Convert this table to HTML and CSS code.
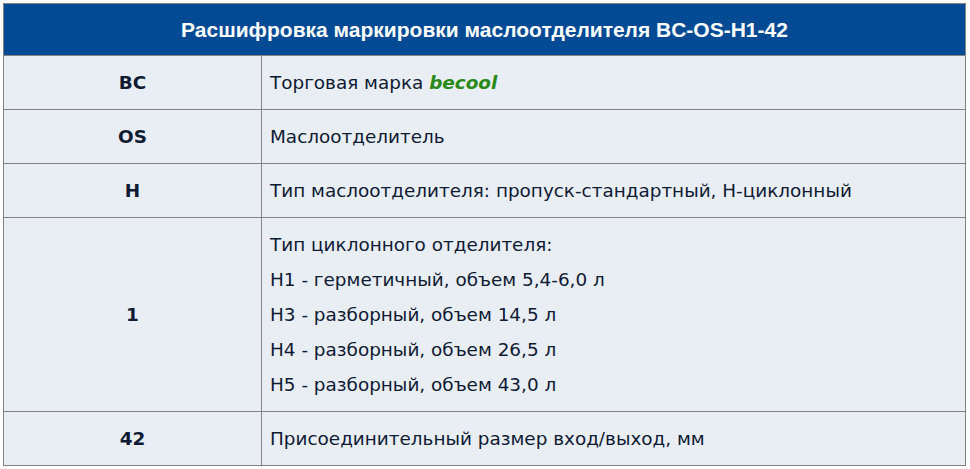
FILE: index.html
```html
<!DOCTYPE html>
<html lang="ru">
<head>
<meta charset="utf-8">
<link rel="stylesheet" href="styles.css">
</head>
<body>
<table class="decode">
  <thead>
    <tr><th colspan="2" class="title">Расшифровка маркировки маслоотделителя BC-OS-H1-42</th></tr>
  </thead>
  <tbody>
    <tr><td class="code">BC</td><td class="desc">Торговая марка <span class="brand">becool</span></td></tr>
    <tr><td class="code">OS</td><td class="desc">Маслоотделитель</td></tr>
    <tr><td class="code">H</td><td class="desc">Тип маслоотделителя: пропуск-стандартный, Н-циклонный</td></tr>
    <tr><td class="code">1</td><td class="desc">
      <div class="line">Тип циклонного отделителя:</div>
      <div class="line">H1 - герметичный, объем 5,4-6,0 л</div>
      <div class="line">H3 - разборный, объем 14,5 л</div>
      <div class="line">H4 - разборный, объем 26,5 л</div>
      <div class="line">H5 - разборный, объем 43,0 л</div>
    </td></tr>
    <tr><td class="code">42</td><td class="desc">Присоединительный размер вход/выход, мм</td></tr>
  </tbody>
</table>
</body>
</html>
```
FILE: styles.css
```css
html, body {
  margin: 0;
  padding: 0;
  background: #ffffff;
}
body {
  padding: 3px 0 0 3px;
}
.decode {
  border-collapse: collapse;
  width: 963px;
  font-family: "DejaVu Sans", sans-serif;
  font-size: 18.4px;
  color: #0f1a33;
}
.decode th, .decode td {
  border: 1px solid #828282;
}
.title {
  background: #034a94;
  color: #ffffff;
  font-family: "Liberation Sans", Arial, sans-serif;
  font-weight: bold;
  font-size: 21px;
  height: 51px;
  padding: 0;
  text-align: center;
}
.decode td {
  background: #e8eef4;
  padding: 9px 8px;
  line-height: 35px;
}
.code {
  width: 241px;
  text-align: center;
  font-weight: bold;
}
.desc {
  text-align: left;
}
.brand {
  color: #2a8a17;
  font-weight: bold;
  font-style: italic;
}
```
